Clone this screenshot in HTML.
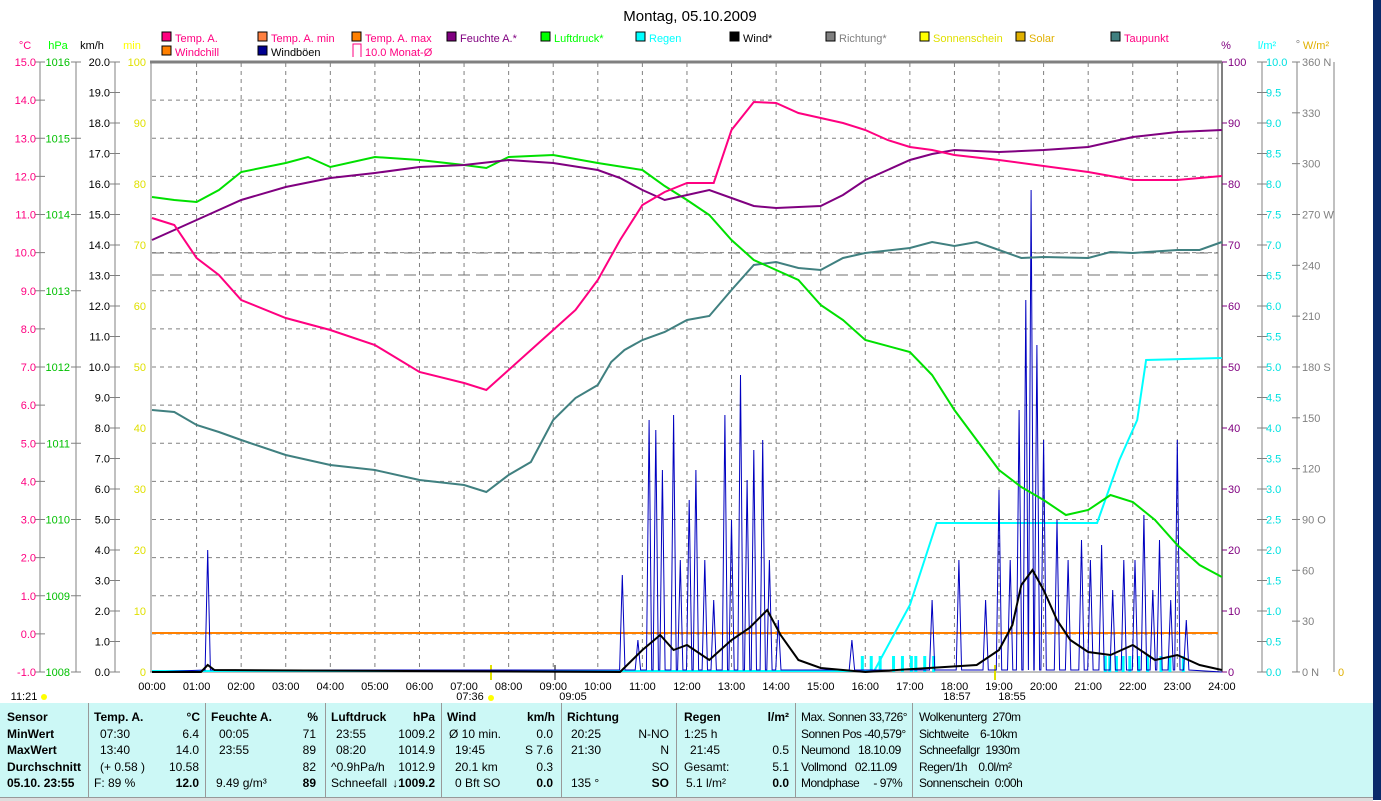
<!DOCTYPE html><html><head><meta charset="utf-8"><style>
*{margin:0;padding:0}body{width:1381px;height:800px;overflow:hidden;background:#fff;font-family:"Liberation Sans",sans-serif;position:relative}
#tb{position:absolute;left:0;top:703px;width:1373px;height:94px;background:#ccf8f6;font-size:12px}
#tb div{position:absolute;white-space:nowrap}
.sep{position:absolute;top:0;width:1px;height:94px;background:#999}
.b{font-weight:bold}
.n{letter-spacing:-0.5px}
#rs{position:absolute;left:1373px;top:0;width:8px;height:800px;background:#0a2a6a}
#bb{position:absolute;left:0;top:797px;width:1373px;height:3px;background:#ddd;border-top:1px solid #999}
</style></head><body>
<svg id="s" width="1373" height="703" style="position:absolute;left:0;top:0" font-family="Liberation Sans, sans-serif" font-size="11"></svg>
<div id="tb"></div><div id="rs"></div><div id="bb"></div>
<script>
var s=document.getElementById('s'),h='';
function X(t){return 152+t*44.58}
function T(x,y,txt,c,a,sz,w){h+='<text x="'+x+'" y="'+y+'" fill="'+(c||'#000')+'"'+(a?' text-anchor="'+a+'"':'')+(sz?' font-size="'+sz+'"':'')+(w?' font-weight="bold"':'')+'>'+txt+'</text>';}
function L(x1,y1,x2,y2,c,w,d){h+='<line x1="'+x1+'" y1="'+y1+'" x2="'+x2+'" y2="'+y2+'" stroke="'+c+'" stroke-width="'+(w||1)+'"'+(d?' stroke-dasharray="'+d+'"':'')+'/>';}
function P(pts,c,w){var a=[];for(var i=0;i<pts.length;i+=2)a.push(X(pts[i]).toFixed(1)+','+pts[i+1]);h+='<polyline fill="none" stroke="'+c+'" stroke-width="'+(w||2)+'" points="'+a.join(' ')+'"/>';}
T(690,21,'Montag, 05.10.2009','#000','middle',15);
var lg=[[162,41,'#ff0080','Temp. A.','#ff0080'],[258,41,'#ff8040','Temp. A. min','#ff0080'],[352,41,'#ff8000','Temp. A. max','#ff0080'],[447,41,'#800080','Feuchte A.*','#800080'],[541,41,'#00ff00','Luftdruck*','#00ff00'],[636,41,'#00ffff','Regen','#00ffff'],[730,41,'#000','Wind*','#000'],[826,41,'#808080','Richtung*','#808080'],[920,41,'#ffff00','Sonnenschein','#e0e000'],[1016,41,'#e0b000','Solar','#e0b000'],[1111,41,'#408080','Taupunkt','#ff0080'],[162,55,'#ff8000','Windchill','#ff0080'],[258,55,'#000090','Windböen','#000']];
lg.forEach(function(l){h+='<rect x="'+l[0]+'" y="'+(l[1]-9)+'" width="9" height="9" fill="'+l[2]+'" stroke="#000"/>';T(l[0]+13,l[1]+1,l[3],l[4]);});
h+='<path d="M353,57V44h8v13" fill="none" stroke="#ff0080"/>';T(365,56,'10.0 Monat-Ø','#ff0080');
T(25,49,'°C','#ff0080','middle');T(58,49,'hPa','#00ff00','middle');T(92,49,'km/h','#000','middle');T(132,49,'min','#ffff00','middle');
T(1226,49,'%','#800080','middle');T(1267,49,'l/m²','#00ffff','middle');T(1298,48,'°','#808080','middle');T(1316,49,'W/m²','#e0b000','middle');
for(var i=1;i<24;i++)L(X(i),63,X(i),671,'#808080',1,'4,4');
for(var i=1;i<16;i++){var y=62+i*38.125;L(152,y,1218,y,'#808080',1,'4,4');}
L(152,253,1218,253,'#707070',1,'12,6');L(152,275,1218,275,'#707070',1,'12,6');
L(150,62,1222,62,'#808080',3);L(151,62,151,672,'#808080',1);L(1218,62,1218,672,'#808080',1);L(1222,62,1222,672,'#808080',2);L(150,672,1222,672,'#808080',1);
L(40,62,40,672,'#808080');L(76,62,76,672,'#808080');L(115,62,115,672,'#808080');
for(var i=0;i<=16;i++){var y=62+i*38.125;L(35,y,45,y,'#808080');T(36,y+4,(15-i).toFixed(1),'#ff0080','end');}
for(var i=0;i<=8;i++){var y=62+i*76.25;L(71,y,81,y,'#808080');T(70,y+4,1016-i,'#00c000','end');}
for(var i=0;i<=20;i++){var y=62+i*30.5;L(110,y,120,y,'#808080');T(110,y+4,(20-i).toFixed(1),'#000','end');}
for(var i=0;i<=10;i++){var y=62+i*61;T(146,y+4,100-i*10,'#e0e000','end');}
L(1262,62,1262,672,'#808080');L(1297,62,1297,672,'#808080');L(1334,62,1334,672,'#808080');
for(var i=0;i<=10;i++){var y=62+i*61;L(1222,y,1227,y,'#800080');T(1228,y+4,100-i*10,'#800080');}
for(var i=0;i<=20;i++){var y=62+i*30.5;L(1257,y,1267,y,'#808080');T(1266,y+4,(10-i*0.5).toFixed(1),'#00e0e0');}
var dl=['360 N','330','300','270 W','240','210','180 S','150','120','90 O','60','30','0 N'];
for(var i=0;i<=12;i++){var y=62+i*50.83;L(1292,y,1300,y,'#808080');T(1302,y+4,dl[i],'#808080');}
T(1338,676,'0','#e0b000');
for(var i=0;i<=24;i++)T(X(i),690,(i<10?'0':'')+i+':00','#000','middle');
T(24,700,'11:21','#000','middle');h+='<circle cx="44" cy="697" r="3" fill="#ffff00"/>';
T(470,700,'07:36','#000','middle');h+='<circle cx="491" cy="698" r="3" fill="#ffff00"/>';L(491,665,491,680,'#e0e000',2);
T(573,700,'09:05','#000','middle');L(555,665,555,680,'#808080',2);
T(957,700,'18:57','#000','middle');T(1012,700,'18:55','#000','middle');L(995,665,995,680,'#e0e000',2);
L(152,633,1218,633,'#ff8000',2);
P([0,671,16.2,671,17,605,17.6,523,21.2,523,21.7,460,22.1,420,22.3,360,24,358],'#00ffff',2);
var rb=[15.9,16.1,16.3,16.6,16.8,17.0,17.1,17.3,17.5,21.35,21.45,21.6,21.75,21.9,22.1,22.3,22.6,22.8,23.1];
rb.forEach(function(t){h+='<rect x="'+X(t)+'" y="656" width="3" height="16" fill="#00ffff"/>';});
var g=[[1.25,550],[10.55,575],[10.9,640],[11.15,420],[11.3,430],[11.45,470],[11.7,415],[11.85,560],[12.05,500],[12.2,470],[12.4,560],[12.6,600],[12.85,415],[13.0,520],[13.2,375],[13.35,480],[13.5,450],[13.7,440],[13.85,560],[14.05,620],[15.7,640],[17.5,600],[18.1,560],[18.7,600],[19.0,490],[19.25,560],[19.45,410],[19.6,300],[19.72,190],[19.85,345],[20.0,440],[20.3,520],[20.55,560],[20.85,540],[21.05,560],[21.3,545],[21.55,590],[21.8,560],[22.05,560],[22.25,515],[22.45,590],[22.6,540],[22.85,600],[23.0,440],[23.2,620]];
var gp=[0,672];g.forEach(function(k){gp.push(k[0]-0.06,670,k[0],k[1],k[0]+0.06,670);});gp.push(24,672);
P(gp,'#0000c0',1);
P([0,672,1.1,672,1.25,665,1.4,670,10.5,672,11.0,650,11.4,635,11.7,650,12.0,645,12.5,660,13.0,640,13.4,628,13.8,610,14.1,635,14.5,660,15,668,16,672,18.5,665,19.0,650,19.3,625,19.5,585,19.75,570,20.0,590,20.3,620,20.6,640,21,652,21.5,655,22,645,22.5,660,23,655,23.5,665,24,670],'#000',2);
P([0,410,0.5,412,1,425,1.5,432,2,440,3,455,4,465,5,470,6,480,7,485,7.5,492,8,475,8.5,462,9,420,9.5,398,10,385,10.3,362,10.6,350,11,340,11.5,332,12,320,12.5,316,13,290,13.5,265,14,262,14.5,268,15,270,15.5,258,16,253,17,248,17.5,242,18,246,18.5,242,19,250,19.5,258,20,257,21,258,21.5,252,22,253,23,250,23.5,250,24,242],'#408080',2);
P([0,197,0.5,200,1,202,1.5,190,2,172,3,163,3.5,157,4,167,5,157,6,160,7,165,7.5,168,8,157,9,155,10,163,11,170,11.5,186,12,200,12.5,215,13,240,13.5,260,14,270,14.5,280,15,305,15.5,320,16,340,17,352,17.5,375,18,410,18.5,440,19,470,19.5,487,20,500,20.5,515,21,510,21.5,495,22,502,22.5,520,23,545,23.5,565,24,577],'#00e000',2);
P([0,240,1,220,2,200,3,187,4,178,5,173,6,167,7,165,8,160,9,163,10,170,10.5,178,11,190,11.5,200,12,195,12.5,190,13,198,13.5,206,14,208,15,206,15.5,195,16,180,17,160,17.5,154,18,150,19,152,20,150,21,147,22,137,23,132,24,130],'#800080',2);
P([0,218,0.5,225,1,258,1.5,275,2,300,3,318,4,330,5,345,6,372,7,383,7.5,390,8,370,8.5,350,9,330,9.5,310,10,280,10.5,240,11,205,11.5,192,12,183,12.6,183,13,130,13.5,102,14,103,14.5,113,15,118,15.5,123,16,130,16.5,140,17,147,17.5,150,18,155,19,160,20,166,21,172,22,180,23,180,24,176],'#ff0080',2);
s.innerHTML=h;
var tb=document.getElementById('tb'),q='';
[88,205,325,441,561,676,795,912].forEach(function(x){q+='<span class="sep" style="left:'+x+'px"></span>';});
function D(x,r,t,b,right){var y=7+r*16.5;var cl=(b?'b ':'')+((x>=800&&!right)?'n':'');q+='<div class="'+cl+'" style="top:'+y+'px;'+(right?'right:'+(1373-x)+'px':'left:'+x+'px')+'">'+t+'</div>';}
var rows=[
[[7,'Sensor',1],[94,'Temp. A.',1],[200,'°C',1,1],[211,'Feuchte A.',1],[318,'%',1,1],[331,'Luftdruck',1],[435,'hPa',1,1],[447,'Wind',1],[555,'km/h',1,1],[567,'Richtung',1],[684,'Regen',1],[789,'l/m²',1,1],[801,'Max. Sonnen 33,726°'],[919,'Wolkenunterg &nbsp;270m']],
[[7,'MinWert',1],[100,'07:30'],[199,'6.4',0,1],[219,'00:05'],[316,'71',0,1],[336,'23:55'],[435,'1009.2',0,1],[449,'Ø 10 min.'],[553,'0.0',0,1],[571,'20:25'],[669,'N-NO',0,1],[684,'1:25 h'],[801,'Sonnen Pos -40,579°'],[919,'Sichtweite &nbsp;&nbsp;&nbsp;6-10km']],
[[7,'MaxWert',1],[100,'13:40'],[199,'14.0',0,1],[219,'23:55'],[316,'89',0,1],[336,'08:20'],[435,'1014.9',0,1],[455,'19:45'],[553,'S 7.6',0,1],[571,'21:30'],[669,'N',0,1],[690,'21:45'],[789,'0.5',0,1],[801,'Neumond &nbsp;&nbsp;18.10.09'],[919,'Schneefallgr &nbsp;1930m']],
[[7,'Durchschnitt',1],[100,'(+ 0.58 )'],[199,'10.58',0,1],[316,'82',0,1],[331,'^0.9hPa/h'],[435,'1012.9',0,1],[455,'20.1 km'],[553,'0.3',0,1],[669,'SO',0,1],[684,'Gesamt:'],[789,'5.1',0,1],[801,'Vollmond &nbsp;&nbsp;02.11.09'],[919,'Regen/1h &nbsp;&nbsp;&nbsp;0.0l/m²']],
[[7,'05.10. 23:55',1],[94,'F: 89 %'],[199,'12.0',1,1],[216,'9.49 g/m³'],[316,'89',1,1],[331,'Schneefall'],[435,'↓1009.2',1,1],[455,'0 Bft SO'],[553,'0.0',1,1],[571,'135 °'],[669,'SO',1,1],[686,'5.1 l/m²'],[789,'0.0',1,1],[801,'Mondphase &nbsp;&nbsp;&nbsp;&nbsp;- 97%'],[919,'Sonnenschein &nbsp;0:00h']]];
rows.forEach(function(r,i){r.forEach(function(c){D(c[0],i,c[1],c[2],c[3]);});});
tb.innerHTML=q;
</script></body></html>
